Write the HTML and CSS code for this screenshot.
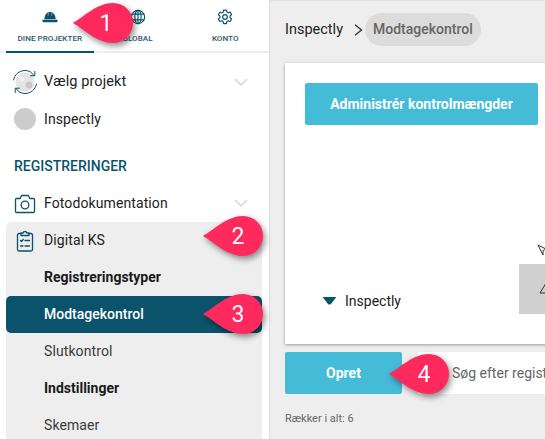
FILE: index.html
```html
<!DOCTYPE html>
<html lang="en">
<head>
  <meta charset="UTF-8" />
  <title>Modtagekontrol</title>
  <link rel="stylesheet" href="styles.css">
</head>
<body>
  <div class="page">
    <aside class="sidebar">
      <nav class="tabs">
        <a class="tab active">
          <svg class="tab-icon" viewBox="0 0 18 16">
            <path class="fill" d="M2.500 10.500A6.500 8.500 0 0 1 15.500 10.500z"/>
            <path class="ridge" d="M7 2.500v4M11 2.500v4"/>
            <path class="fill" d="M.5 11.200h17v1.300c0 .9-.7 1.500-1.500 1.500H2c-.8 0-1.500-.6-1.500-1.500z"/>
          </svg>
          <span>DINE PROJEKTER</span>
        </a>
        <a class="tab">
          <svg class="tab-icon" viewBox="0 0 18 18">
            <g class="line">
              <circle cx="9" cy="9" r="7.500"/>
              <ellipse cx="9" cy="9" rx="3.500" ry="7.500"/>
              <path d="M2.300 5.800h13.400M2.300 12.200h13.400M9 1.500v15"/>
            </g>
          </svg>
          <span>GLOBAL</span>
        </a>
        <a class="tab">
          <svg class="tab-icon" viewBox="0 0 18 18">
            <g class="line">
              <path d="M7.400 1.200h3.200l.5 2.300 1.500.8 2.200-.8 1.600 2.800-1.700 1.600v1.800l1.700 1.600-1.600 2.800-2.200-.8-1.500.8-.5 2.300H7.400l-.5-2.300-1.500-.8-2.200.8-1.600-2.800 1.700-1.600V8.100L1.600 6.500l1.600-2.800 2.200.8 1.500-.8z"/>
              <circle cx="9" cy="9" r="2.600"/>
            </g>
          </svg>
          <span>KONTO</span>
        </a>
      </nav>

      <div class="menu">
        <div class="row">
          <svg class="row-icon sync" viewBox="0 0 26 26">
            <circle cx="13" cy="13" r="9.500" fill="#e4e4e4"/>
            <circle cx="17" cy="16" r="3.500" fill="#c8c8c8"/>
            <circle cx="10" cy="10" r="2.500" fill="#f0f0f0"/>
            <g class="line thin">
              <path d="M1.500 11C2.500 5.500 7.500 1.500 13 1.500c4 0 7.200 2 9 5"/>
              <path d="M24.500 15c-1 5.500-6 9.500-11.500 9.500-4 0-7.200-2-9-5"/>
              <path d="M22.800 2.500v4.300h-4.300M3.200 23.500v-4.300h4.300"/>
            </g>
          </svg>
          <span class="pick">Vælg projekt</span>
          <svg class="chevron" viewBox="0 0 14 8"><path d="M1 1l6 6 6-6"/></svg>
        </div>
        <div class="row">
          <span class="avatar"></span>
          <span>Inspectly</span>
        </div>

        <h4 class="menu-title">REGISTRERINGER</h4>

        <div class="row">
          <svg class="row-icon low" viewBox="0 0 22 20">
            <g class="line">
              <path d="M2.500 4.500h3.700L7.500 1.500h7l1.300 3h3.700c.6 0 1 .4 1 1v12c0 .6-.4 1-1 1h-17c-.6 0-1-.4-1-1v-12c0-.6.4-1 1-1z"/>
              <circle cx="11" cy="11" r="3.800"/>
            </g>
          </svg>
          <span>Fotodokumentation</span>
          <svg class="chevron" viewBox="0 0 14 8"><path d="M1 1l6 6 6-6"/></svg>
        </div>

        <div class="group">
          <div class="row">
            <svg class="row-icon low" viewBox="0 0 22 22">
              <g class="line">
                <path d="M7 3.500H5c-.8 0-1.500.7-1.500 1.500v14.500c0 .8.700 1.500 1.500 1.500h12c.8 0 1.500-.7 1.500-1.500V5c0-.8-.7-1.500-1.500-1.500h-2"/>
                <path d="M7 5.500h8V3h-2.200c-.2-2-3.400-2-3.600 0H7z"/>
                <path d="M6.500 10.500l1 1 1.800-2M11 10.500h4.500M11 16h4.500M6.500 16h2.500"/>
              </g>
            </svg>
            <span>Digital KS</span>
          </div>
          <div class="row sub strong">Registreringstyper</div>
          <div class="row sub selected">Modtagekontrol</div>
          <div class="row sub">Slutkontrol</div>
          <div class="row sub strong">Indstillinger</div>
          <div class="row sub">Skemaer</div>
        </div>
      </div>
    </aside>

    <main class="main">
      <div class="crumbs">
        <span>Inspectly</span>
        <svg class="crumb-sep" viewBox="0 0 9 12"><path d="M1 .8l6.500 5.200L1 11.200"/></svg>
        <span class="crumb-pill">Modtagekontrol</span>
      </div>

      <section class="card">
        <button class="btn wide">Administrér kontrolmængder</button>
        <div class="legend">
          <svg class="legend-mark" viewBox="0 0 13 8"><path d="M.5 0h12c.4 0 .6.4.3.7L8 7c-.8.8-2.200.8-3 0L.2.7C-.1.4.1 0 .5 0z"/></svg>
          <span>Inspectly</span>
        </div>
        <svg class="chart-pointer" viewBox="0 0 10 12"><path d="M1 1l8 4-3 1.500V11z"/></svg>
        <div class="chart-box">
          <svg class="chart-warn" viewBox="0 0 14 12"><path d="M7 1l6 10H1z"/></svg>
        </div>
      </section>

      <div class="actions">
        <button class="btn create">Opret</button>
        <div class="search">Søg efter registreringer</div>
      </div>
      <p class="total">Rækker i alt: 6</p>
    </main>

    <div class="callout c1">
      <svg viewBox="0 0 60 40"><path d="M0 20C12 13 24 0 40 0a20 20 0 0 1 0 40C24 40 12 27 0 20z"/></svg>
      <b>1</b>
    </div>
    <div class="callout c2">
      <svg viewBox="0 0 60 40"><path d="M0 20C12 13 24 0 40 0a20 20 0 0 1 0 40C24 40 12 27 0 20z"/></svg>
      <b>2</b>
    </div>
    <div class="callout c3">
      <svg viewBox="0 0 60 40"><path d="M0 20C12 13 24 0 40 0a20 20 0 0 1 0 40C24 40 12 27 0 20z"/></svg>
      <b>3</b>
    </div>
    <div class="callout c4">
      <svg viewBox="0 0 60 40"><path d="M0 20C12 13 24 0 40 0a20 20 0 0 1 0 40C24 40 12 27 0 20z"/></svg>
      <b>4</b>
    </div>
  </div>
</body>
</html>
```

FILE: styles.css
```css
:root {
  --teal: #0a536b;
  --sky: #44bbd7;
  --grey-bg: #eeeeee;
  --text: #222222;
}

* {
  box-sizing: border-box;
}

html, body {
  margin: 0;
  height: 100%;
  overflow: hidden;
}

body {
  font-family: Roboto, "Liberation Sans", sans-serif;
  color: var(--text);
  background: var(--grey-bg);
}

.page {
  position: relative;
  display: flex;
  height: 439px;
  overflow: hidden;
}

.line {
  fill: none;
  stroke: var(--teal);
  stroke-width: 1.3;
  stroke-linejoin: round;
  stroke-linecap: round;
}

.thin {
  stroke-width: 1;
}

.fill {
  fill: var(--teal);
}

.ridge {
  fill: none;
  stroke: #fff;
  stroke-width: 0.5;
}

/* sidebar */
.sidebar {
  width: 269px;
  flex: none;
  background: #fff;
  box-shadow: 1px 0 1px rgba(0,0,0,0.06);
}

.tabs {
  display: flex;
  height: 53px;
  padding-left: 6px;
  border-bottom: 2px solid #eeeeee;
}

.tab {
  width: 88px;
  height: 53px;
  display: flex;
  flex-direction: column;
  align-items: center;
  padding-top: 9px;
  font-size: 8.1px;
  font-weight: 500;
  color: #2b5a6c;
}

.tab.active {
  border-bottom: 2px solid var(--teal);
}

.tab span {
  margin-top: 8px;
  line-height: 11px;
  white-space: nowrap;
}

.tab-icon {
  width: 16px;
  height: 16px;
}

.menu {
  padding-top: 11px;
}

.row {
  display: flex;
  align-items: center;
  height: 37px;
  padding-left: 14px;
  padding-bottom: 2px;
  font-size: 14px;
  letter-spacing: 0.1px;
}

.row-icon {
  width: 22px;
  height: 22px;
  flex: none;
  margin-right: 8px;
}

.low {
  margin-top: 2px;
}

.sync {
  width: 26px;
  height: 26px;
  margin: 0 6px 0 -2px;
}

.pick {
  font-size: 14.5px;
}

.avatar {
  width: 22px;
  height: 22px;
  flex: none;
  margin-top: 1px;
  margin-right: 8px;
  border-radius: 50%;
  background: #cccccc;
}

.chevron {
  width: 14px;
  height: 8px;
  margin-left: auto;
  margin-right: 21px;
  fill: none;
  stroke: #cfcfcf;
  stroke-width: 1.2;
}

.menu-title {
  margin: 0;
  padding: 18px 14px 0;
  height: 47px;
  line-height: 20px;
  font-size: 14px;
  font-weight: 500;
  color: var(--teal);
}

.group {
  margin: 0 7px 0 6px;
  background: var(--grey-bg);
  border-radius: 5px 5px 0 0;
}

.group .row {
  padding-left: 8px;
}

.group .row.sub {
  padding-left: 38px;
}

.sub {
  color: #3a3a3a;
}

.strong {
  color: #1a1a1a;
  font-weight: 700;
  letter-spacing: 0;
}

.group .selected {
  color: #fff;
  font-weight: 500;
  letter-spacing: 0;
  background: var(--teal);
  border-radius: 5px;
}

/* main area */
.main {
  flex: 1;
  min-width: 0;
  padding-left: 16px;
  border-top: 1px solid #e2e2e2;
}

.crumbs {
  display: flex;
  align-items: center;
  height: 33px;
  margin-top: 12px;
  font-size: 14.5px;
}

.crumb-sep {
  width: 9px;
  height: 12px;
  margin: 0 2px 0 11px;
  fill: none;
  stroke: #333;
  stroke-width: 1.3;
}

.crumb-pill {
  height: 33px;
  line-height: 33px;
  padding: 0 8px;
  border-radius: 17px;
  background: #dcdcdc;
  color: #666;
  font-size: 14px;
  font-weight: 500;
}

.card {
  position: relative;
  width: 300px;
  height: 281px;
  margin-top: 17px;
  padding: 20px;
  background: #fff;
  box-shadow: 0 1px 3px rgba(0,0,0,0.35);
}

.btn {
  display: block;
  border: none;
  border-radius: 2px;
  background: var(--sky);
  color: #fff;
  font-family: inherit;
  font-size: 14px;
  font-weight: 700;
}

.wide {
  width: 233px;
  height: 42px;
}

.legend {
  display: flex;
  align-items: center;
  margin: 166px 0 0 18px;
  height: 20px;
  font-size: 14px;
}

.legend-mark {
  width: 13px;
  height: 8px;
  margin-right: 9px;
  fill: var(--teal);
}

.chart-pointer {
  position: absolute;
  left: 252px;
  top: 181px;
  width: 10px;
  height: 12px;
  fill: #fff;
  stroke: #333;
  stroke-width: 1;
}

.chart-box {
  position: absolute;
  left: 234px;
  top: 201px;
  width: 66px;
  height: 50px;
  background: #d0d0d0;
}

.chart-warn {
  position: absolute;
  left: 20px;
  top: 18px;
  width: 14px;
  height: 12px;
  fill: none;
  stroke: #333;
  stroke-width: 1;
}

.actions {
  display: flex;
  gap: 16px;
  margin-top: 8px;
  height: 42px;
}

.create {
  width: 117px;
  height: 42px;
  flex: none;
}

.search {
  flex: 1;
  min-width: 0;
  padding-left: 34px;
  line-height: 42px;
  font-size: 14px;
  color: #666;
  background: #fff;
  white-space: nowrap;
  overflow: hidden;
}

.total {
  margin: 18px 0 0;
  font-size: 11px;
  line-height: 14px;
  color: #666;
}

/* numbered callouts drawn over the screenshot */
.callout {
  position: absolute;
  width: 60px;
  height: 40px;
  filter: drop-shadow(2px 3px 3px rgba(0,0,0,0.45));
}

.callout svg {
  display: block;
  width: 60px;
  height: 40px;
  fill: #fe2a5e;
}

.callout b {
  position: absolute;
  left: 20px;
  top: 0;
  width: 30px;
  line-height: 41px;
  text-align: center;
  font-size: 23px;
  font-weight: 400;
  color: #fff;
}

.c1 { left: 73px; top: 3px; }
.c1 b { left: 18px; }
.c2 { left: 203px; top: 216px; }
.c3 { left: 203px; top: 294px; }
.c4 { left: 389px; top: 354px; }
```
